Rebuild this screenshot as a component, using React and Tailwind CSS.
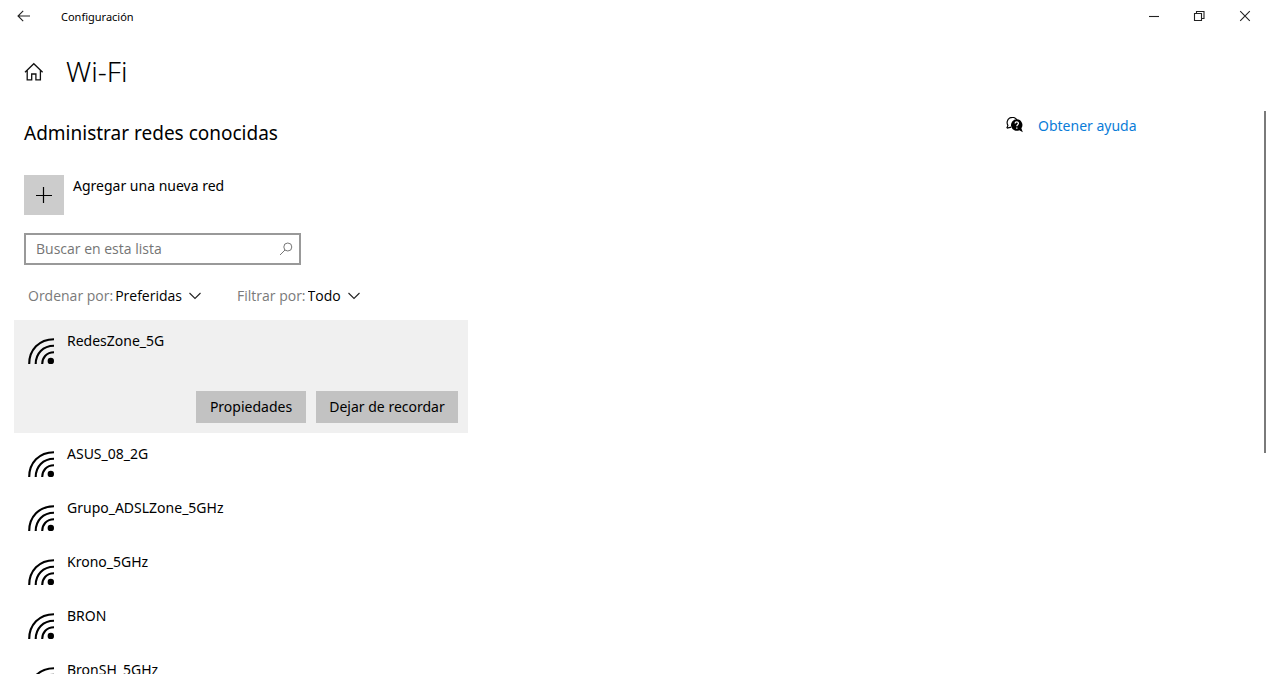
import { useState } from 'react';

const NETWORKS = ['RedesZone_5G', 'ASUS_08_2G', 'Grupo_ADSLZone_5GHz', 'Krono_5GHz', 'BRON', 'BronSH_5GHz'];

function WifiIcon() {
  return (
    <svg className="w-[27px] h-[27px] shrink-0" viewBox="0 0 27 27" fill="none" stroke="#000" strokeWidth="2.1" aria-hidden="true">
      <path d="M1.200 26C1.200 12 11 1.200 26 1.200" />
      <path d="M7.700 26C7.700 15.500 15 7.700 26 7.700" />
      <path d="M14.200 26C14.200 19.500 18.500 14.200 26 14.200" />
      <circle cx="22.800" cy="22.900" r="3.200" fill="#000" stroke="none" />
    </svg>
  );
}

function Chevron() {
  return (
    <svg className="w-3 h-2 ml-[7px] pointer-events-none" viewBox="0 0 12 8" fill="none" stroke="#222" strokeWidth="1.1" aria-hidden="true">
      <path d="M0.500 1L6 6.500L11.500 1" />
    </svg>
  );
}

function Picker({ id, label, options }) {
  return (
    <div className="flex items-center font-['Open_Sans',sans-serif]">
      <label htmlFor={id} className="text-[#7a7a7a] mr-0.5">{label}</label>
      <select id={id} className="appearance-none field-sizing-content bg-transparent text-black outline-none">
        {options.map((o) => (
          <option key={o}>{o}</option>
        ))}
      </select>
      <Chevron />
    </div>
  );
}

function TitleBar() {
  return (
    <header className="flex items-center h-8 shrink-0 pl-[17px]">
      <button aria-label="Atrás">
        <svg className="w-3.5 h-3.5" viewBox="0 0 14 14" fill="none" stroke="#222" strokeWidth="1.1">
          <path d="M13 7H1M6.200 1.800L1 7L6.200 12.200" />
        </svg>
      </button>
      <span className="ml-[30px] pt-px text-[11px]">Configuración</span>
      <div className="flex ml-auto">
        <button aria-label="Minimizar" className="w-[46px] h-8 flex items-center justify-center">
          <svg className="w-3 h-3" viewBox="0 0 12 12" stroke="#222" strokeWidth="1.100">
            <path d="M2 6.500H12" />
          </svg>
        </button>
        <button aria-label="Restaurar" className="w-[46px] h-8 flex items-center justify-center">
          <svg className="w-3 h-3" viewBox="0 0 12 12" fill="none" stroke="#222" strokeWidth="1.100">
            <path d="M1.500 3.500H8.500V10.500H1.500ZM3.500 3.500V1.500H11V8.500H8.500" />
          </svg>
        </button>
        <button aria-label="Cerrar" className="w-[46px] h-8 flex items-center justify-center">
          <svg className="w-3 h-3" viewBox="0 0 12 12" stroke="#222" strokeWidth="1.100">
            <path d="M1.200 1.200L10.800 10.800M10.800 1.200L1.200 10.800" />
          </svg>
        </button>
      </div>
    </header>
  );
}

export default function App() {
  const [selected, setSelected] = useState(NETWORKS[0]);

  return (
    <div className="h-screen overflow-hidden flex flex-col bg-white text-black text-[14px] leading-5 font-['Noto_Sans',sans-serif]">
      <TitleBar />

      <div className="flex items-center h-[79px] shrink-0 pl-6">
        <button aria-label="Inicio">
          <svg className="w-5 h-5" viewBox="0 0 20 20" fill="none" stroke="#111" strokeWidth="1.3">
            <path d="M1 10.200L9.800 1.700L18.600 10.200M3.200 8.500V17.800H7.700V12H11.900V17.800H16.400V8.500" />
          </svg>
        </button>
        <h1 className="ml-[22px] pb-0.5 text-[28px] leading-8 font-light">Wi-Fi</h1>
      </div>

      <div className="flex flex-1 min-h-0">
        <main className="flex-1 min-w-0 overflow-hidden">
          <div className="pl-6 pt-2">
            <h2 className="text-[19px] leading-7">Administrar redes conocidas</h2>

            <button className="flex items-start mt-7 text-left">
              <span className="w-10 h-10 bg-[#cccccc] flex items-center justify-center">
                <svg className="w-4 h-4" viewBox="0 0 16 16" stroke="#000" strokeWidth="1.2" aria-hidden="true">
                  <path d="M7.500 0V16M0 8.500H16" />
                </svg>
              </span>
              <span className="ml-[9px] pt-px">Agregar una nueva red</span>
            </button>

            <div className="flex items-center w-[277px] h-8 mt-[18px] border-2 border-[#999] pl-[10px] pr-[6px]">
              <input
                type="text"
                aria-label="Buscar en esta lista"
                placeholder="Buscar en esta lista"
                className="flex-1 min-w-0 outline-none font-['Open_Sans',sans-serif] placeholder:text-[#757575]"
              />
              <svg className="w-3.5 h-3.5" viewBox="0 0 14 14" fill="none" stroke="#777" strokeWidth="1" aria-hidden="true">
                <circle cx="8.800" cy="5" r="4" />
                <path d="M6 8L1 13" />
              </svg>
            </div>

            <div className="flex items-center gap-9 mt-[21px] pl-1">
              <Picker id="sort" label="Ordenar por:" options={['Preferidas']} />
              <Picker id="filter" label="Filtrar por:" options={['Todo']} />
            </div>
          </div>

          <ul className="mt-[14px] ml-[14px] w-[454px]">
            {NETWORKS.map((name) => (
              <li key={name} className={name === selected ? 'bg-[#f0f0f0] h-[113px]' : 'h-[54px]'}>
                <button onClick={() => setSelected(name)} className="flex w-full items-start text-left pl-[14px] pt-[11px]">
                  <span className="pt-[7px]">
                    <WifiIcon />
                  </span>
                  <span className="ml-3">{name}</span>
                </button>
                {name === selected && (
                  <div className="flex justify-end gap-[10px] pr-[10px] mt-[26px]">
                    <button className="h-8 w-[110px] bg-[#c2c2c2]">Propiedades</button>
                    <button className="h-8 w-[142px] bg-[#c2c2c2]">Dejar de recordar</button>
                  </div>
                )}
              </li>
            ))}
          </ul>
        </main>

        <aside className="w-[262px] shrink-0 flex justify-between items-start pr-[2px]">
          <a href="#ayuda" className="flex items-center mt-[5px] text-[#0a7cd8]">
            <svg className="w-[18px] h-[18px]" viewBox="0 0 17 17" aria-hidden="true">
              <path d="M0.800 10.500L1.800 7.900A4.900 4.900 0 1 1 10.300 2.700" fill="none" stroke="#000" strokeWidth="1.100" />
              <path d="M0.800 10.500L5 9.500" stroke="#000" strokeWidth="1.100" />
              <path d="M10.200 2.200A5.400 5.400 0 1 0 12.600 12.400L15.900 14.500L14.500 10.700A5.400 5.400 0 0 0 10.200 2.200Z" fill="#000" />
              <path d="M8.600 6.200C8.600 4.100 11.800 4.200 11.700 6.100C11.600 7.300 10.200 7.200 10.200 8.700M10.200 9.800V11" fill="none" stroke="#fff" strokeWidth="1.200" />
            </svg>
            <span className="ml-[14px]">Obtener ayuda</span>
          </a>
          <div className="w-[2px] h-[342px] bg-[#7a7a7a]" />
        </aside>
      </div>
    </div>
  );
}
